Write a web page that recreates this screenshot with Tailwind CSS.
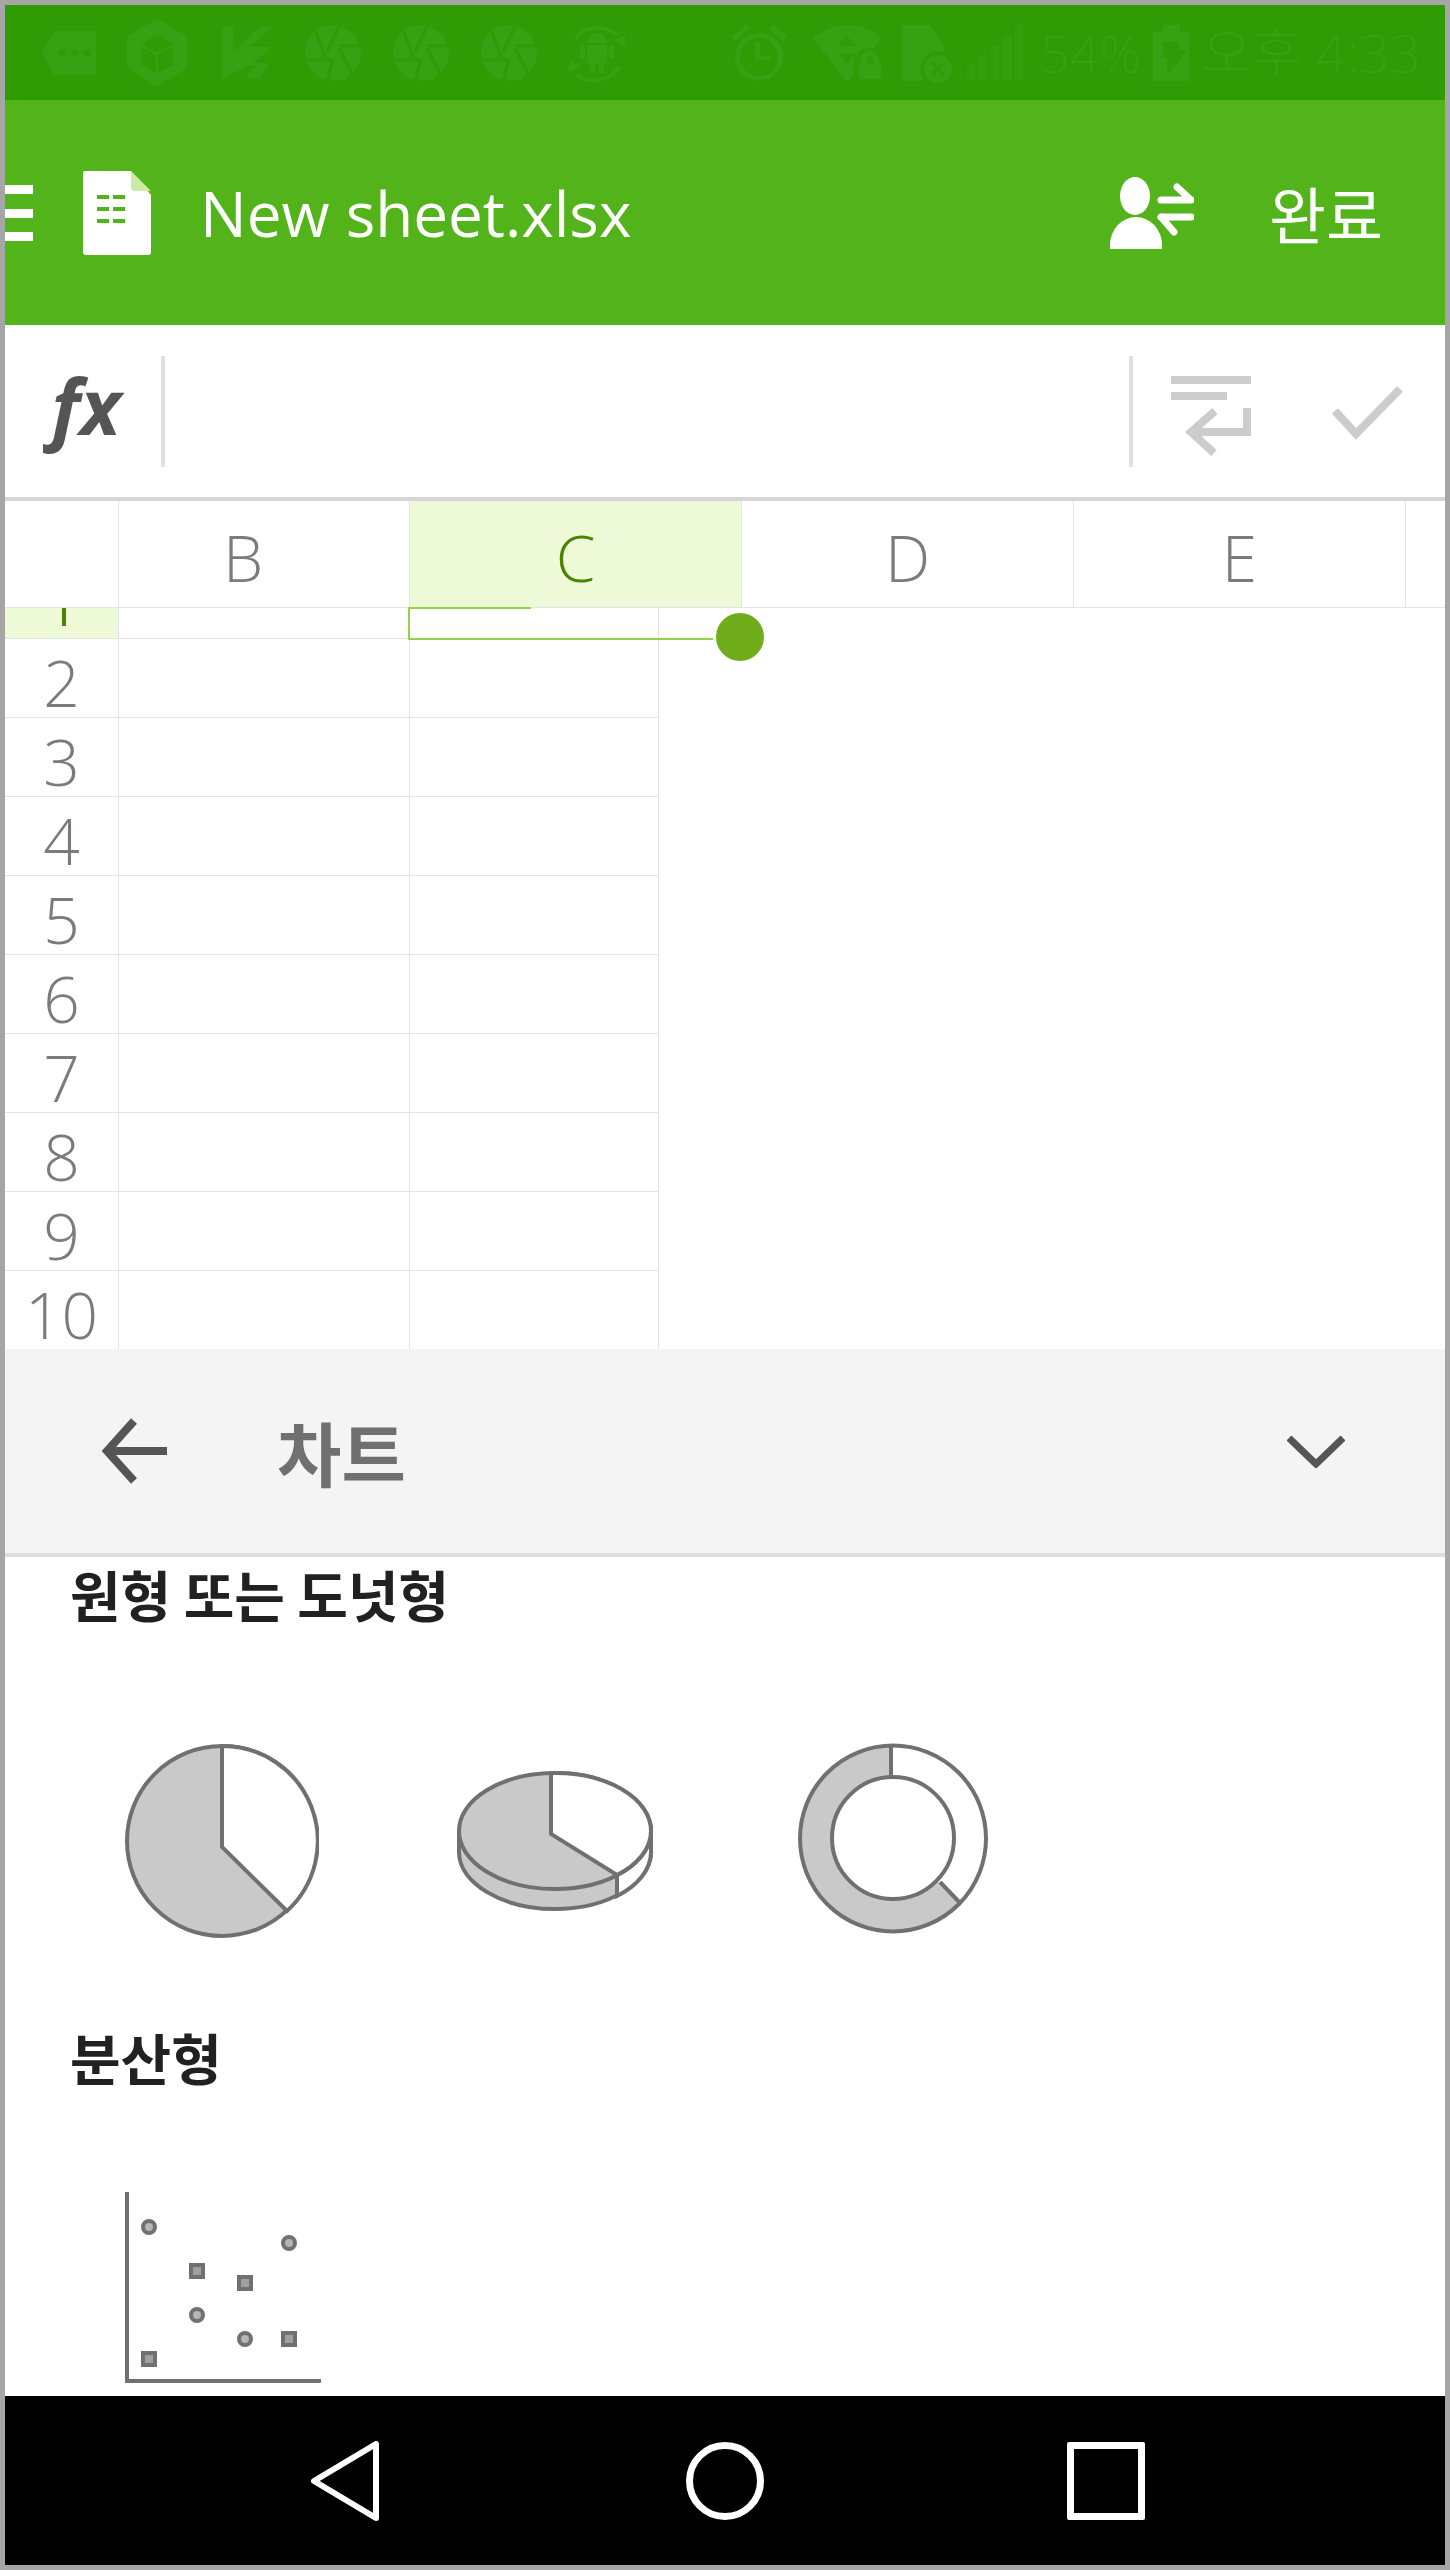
<!DOCTYPE html>
<html>
<head>
<meta charset="utf-8">
<script src="https://cdn.jsdelivr.net/npm/@tailwindcss/browser@4"></script>
</head>
<body class="bg-[#a6a6a6] font-['Open_Sans','Noto_Sans_CJK_KR',sans-serif]">
<div class="w-[1450px] h-[2570px] p-[5px] overflow-hidden">
  <div class="h-[2560px] bg-white flex flex-col overflow-hidden">

    <!-- status bar -->
    <div class="h-[95px] shrink-0 bg-[#2f9b05] text-[#38a013] relative">
      <svg class="absolute left-0 top-0" width="1440" height="95" viewBox="5 5 1440 95" fill="currentColor">
        <path d="M42 53l12-22h42v44H54z"/>
        <g fill="#2f9b05"><circle cx="62" cy="53" r="3.5"/><circle cx="75" cy="53" r="3.5"/><circle cx="87" cy="53" r="3.5"/></g>
        <path d="M155 20a4 4 0 0 1 4 0l26 15a4 4 0 0 1 2 4v26a4 4 0 0 1-2 4L159 86a4 4 0 0 1-4 0L129 69a4 4 0 0 1-2-4V39a4 4 0 0 1 2-4z"/>
        <path d="M157 34l16 11v20l-16 8-16-8V45z" fill="#2f9b05"/>
        <path d="M141 45l16 9 16-9M157 54v19" fill="none" stroke="currentColor" stroke-width="2.5"/>
        <path d="M222 27h11v25l27-25h13l-23 20h23l-21 16h14q6 0 2 3l-8 12h-15l12-13h-9l-26 15z"/>
        <g id="ap">
          <circle cx="333" cy="53" r="28"/>
          <path d="M340 25L327 52M362 46H339M353 75L339 49M327 80L333 60M305 60H333M315 30L326 59" fill="none" stroke="#2f9b05" stroke-width="3"/>
        </g>
        <use href="#ap" x="88"/>
        <use href="#ap" x="176"/>
        <path d="M575 38a30 30 0 0 1 42-3M619 67a30 30 0 0 1-42 8" fill="none" stroke="currentColor" stroke-width="4"/>
        <path d="M625 35v12l-11-7zM569 59v13l11-6z"/>
        <path d="M587 43a10 10 0 0 1 20 0zM587 45h20v18h-3v8a2.5 2.5 0 0 1-5 0v-8h-4v8a2.5 2.5 0 0 1-5 0v-8h-3zM580 45h5v13h-5zM609 45h5v13h-5z"/>
        <circle cx="759" cy="57" r="21.5" fill="none" stroke="currentColor" stroke-width="5"/>
        <path d="M755 42h5v14h11v4h-16zM731 37l15-13 4 5-15 12zM769 29l4-5 14 12-4 5z"/>
        <path d="M813 38a52 52 0 0 1 69 0l-35 44z"/>
        <path d="M847 36l10 10h-20zM837 53h20l-10 10z" fill="#2f9b05"/>
        <path d="M854 84V62a16 14 0 0 1 32 0V84z" fill="#2f9b05"/>
        <path d="M859 64h22v15h-22z"/>
        <path d="M863.5 66v-6a6.5 6.5 0 0 1 13 0v6" fill="none" stroke="currentColor" stroke-width="6"/>
        <path d="M902 25h28l14 20v36h-42z"/>
        <circle cx="938" cy="69" r="18" fill="#2f9b05"/>
        <circle cx="938" cy="69" r="14"/>
        <path d="M932 63l12 12M944 63l-12 12" stroke="#2f9b05" stroke-width="3"/>
        <path d="M967 65h8v16h-8zM979 56h8v25h-8zM991 46h8v35h-8zM1003 35h9v46h-9zM1015 25h8v56h-8z" opacity=".6"/>
        <path d="M1163 25h17v7h9v49h-36V32h10z"/>
        <path d="M1163 42h16v8h8l-20 26V58h-4z" fill="#2f9b05"/>
      </svg>
      <span class="absolute left-[1035px] top-[20px] text-[52px] leading-[56px] font-light">54%</span>
      <span class="absolute left-[1197px] top-[19px] text-[54px] leading-[56px] font-light">오후 4:33</span>
    </div>

    <!-- app bar -->
    <div class="h-[225px] shrink-0 bg-[#52b31a] flex items-center text-white">
      <div class="w-[28px] h-[56px] flex flex-col justify-between mt-[1px]">
        <div class="h-[9px] bg-white"></div><div class="h-[9px] bg-white"></div><div class="h-[9px] bg-white"></div>
      </div>
      <svg class="ml-[50px] mt-[1px]" width="68" height="84" viewBox="0 0 68 84">
        <path d="M2 0h46l20 24v57a3 3 0 0 1-3 3H3a3 3 0 0 1-3-3V2a2 2 0 0 1 2-2z" fill="#fff"/>
        <path d="M48 0l20 20H52a4 4 0 0 1-4-4z" fill="#cdeaa3"/>
        <path d="M14 24h12v4H14zM30 24h12v4H30zM14 36h12v4H14zM30 36h12v4H30zM14 48h12v4H14zM30 48h12v4H30z" fill="#52b31a"/>
      </svg>
      <span class="ml-[49px] text-[62px] leading-none font-normal">New sheet.xlsx</span>
      <svg class="ml-auto mt-[1px]" width="84" height="72" viewBox="0 0 84 72" fill="#fff">
        <ellipse cx="25" cy="19" rx="15" ry="19"/>
        <path d="M0 72v-4a26 28 0 0 1 52 0v4z"/>
        <path d="M51 23h30M67 10l14 13M81 40H51M64 55L51 40" fill="none" stroke="#fff" stroke-width="7" stroke-linecap="round"/>
      </svg>
      <span class="ml-[75px] mr-[62px] text-[62px] leading-none font-['Noto_Sans_CJK_KR',sans-serif] font-normal">완료</span>
    </div>

    <!-- formula bar -->
    <div class="h-[172px] shrink-0 flex items-center">
      <span class="w-[156px] text-center italic font-bold text-[#555] text-[77px] leading-none -mt-[12px] pl-[6px]">fx</span>
      <div class="w-[4px] h-[111px] mt-[1px] bg-[#e0e0e0]"></div>
      <div class="ml-auto w-[4px] h-[111px] mt-[1px] bg-[#e0e0e0]"></div>
      <svg class="ml-[38px] mt-[10px]" width="80" height="80" viewBox="0 0 80 80" fill="none" stroke="#cccccc" stroke-width="8">
        <path d="M0 4h80M0 20h56M76 32v24H22M44 35L20 56l23 21"/>
      </svg>
      <svg class="ml-[79px] mr-[41px] mt-[4px]" width="74" height="58" viewBox="0 0 74 58" fill="none" stroke="#cccccc" stroke-width="8">
        <path d="M5 27l21 23L70 5"/>
      </svg>
    </div>
    <div class="h-[4px] shrink-0 bg-[#d6d6d6]"></div>

    <!-- sheet -->
    <div class="h-[848px] shrink-0 relative text-[#7c7a7b] font-light">
      <!-- column headers -->
      <div class="h-[107px] flex border-b border-[#e3e3e3] text-[64px] leading-none">
        <div class="w-[114px] shrink-0 border-r border-[#e3e3e3]"></div>
        <div class="w-[291px] shrink-0 border-r border-[#e3e3e3] flex items-center justify-center pr-[42px] pt-[8px]">B</div>
        <div class="w-[332px] shrink-0 border-r border-[#e3e3e3] bg-[#eef9d8] text-[#4b8405] flex items-center justify-center pt-[8px]">C</div>
        <div class="w-[332px] shrink-0 border-r border-[#e3e3e3] flex items-center justify-center pt-[8px]">D</div>
        <div class="w-[332px] shrink-0 border-r border-[#e3e3e3] flex items-center justify-center pt-[8px]">E</div>
      </div>
      <!-- rows -->
      <div class="w-[654px] text-[64px] leading-none">
        <div class="h-[31px] flex border-b border-[#e3e3e3]">
          <div class="w-[114px] shrink-0 bg-[#eef9d8] border-r border-[#e3e3e3] relative"><span class="absolute left-[57px] top-0 w-[4px] h-[18px] bg-[#4b8405]"></span></div>
          <div class="w-[291px] shrink-0 border-r border-[#e3e3e3]"></div>
          <div class="flex-1 border-r border-[#e3e3e3]"></div>
        </div>
        <div class="h-[79px] flex border-b border-[#e3e3e3]"><div class="w-[114px] shrink-0 border-r border-[#e3e3e3] flex items-center justify-center pt-[10px]">2</div><div class="w-[291px] shrink-0 border-r border-[#e3e3e3]"></div><div class="flex-1 border-r border-[#e3e3e3]"></div></div>
        <div class="h-[79px] flex border-b border-[#e3e3e3]"><div class="w-[114px] shrink-0 border-r border-[#e3e3e3] flex items-center justify-center pt-[10px]">3</div><div class="w-[291px] shrink-0 border-r border-[#e3e3e3]"></div><div class="flex-1 border-r border-[#e3e3e3]"></div></div>
        <div class="h-[79px] flex border-b border-[#e3e3e3]"><div class="w-[114px] shrink-0 border-r border-[#e3e3e3] flex items-center justify-center pt-[10px]">4</div><div class="w-[291px] shrink-0 border-r border-[#e3e3e3]"></div><div class="flex-1 border-r border-[#e3e3e3]"></div></div>
        <div class="h-[79px] flex border-b border-[#e3e3e3]"><div class="w-[114px] shrink-0 border-r border-[#e3e3e3] flex items-center justify-center pt-[10px]">5</div><div class="w-[291px] shrink-0 border-r border-[#e3e3e3]"></div><div class="flex-1 border-r border-[#e3e3e3]"></div></div>
        <div class="h-[79px] flex border-b border-[#e3e3e3]"><div class="w-[114px] shrink-0 border-r border-[#e3e3e3] flex items-center justify-center pt-[10px]">6</div><div class="w-[291px] shrink-0 border-r border-[#e3e3e3]"></div><div class="flex-1 border-r border-[#e3e3e3]"></div></div>
        <div class="h-[79px] flex border-b border-[#e3e3e3]"><div class="w-[114px] shrink-0 border-r border-[#e3e3e3] flex items-center justify-center pt-[10px]">7</div><div class="w-[291px] shrink-0 border-r border-[#e3e3e3]"></div><div class="flex-1 border-r border-[#e3e3e3]"></div></div>
        <div class="h-[79px] flex border-b border-[#e3e3e3]"><div class="w-[114px] shrink-0 border-r border-[#e3e3e3] flex items-center justify-center pt-[10px]">8</div><div class="w-[291px] shrink-0 border-r border-[#e3e3e3]"></div><div class="flex-1 border-r border-[#e3e3e3]"></div></div>
        <div class="h-[79px] flex border-b border-[#e3e3e3]"><div class="w-[114px] shrink-0 border-r border-[#e3e3e3] flex items-center justify-center pt-[10px]">9</div><div class="w-[291px] shrink-0 border-r border-[#e3e3e3]"></div><div class="flex-1 border-r border-[#e3e3e3]"></div></div>
        <div class="h-[78px] flex"><div class="w-[114px] shrink-0 border-r border-[#e3e3e3] flex items-center justify-center pt-[10px]">10</div><div class="w-[291px] shrink-0 border-r border-[#e3e3e3]"></div><div class="flex-1 border-r border-[#e3e3e3]"></div></div>
      </div>
      <!-- selection overlay -->
      <div class="absolute left-[403px] top-[106px] w-[305px] h-[33px] border-l-2 border-b-2 border-[#93d24a]"></div>
      <div class="absolute left-[403px] top-[106px] w-[123px] h-[2px] bg-[#93d24a]"></div>
      <div class="absolute left-[711px] top-[112px] w-[48px] h-[48px] rounded-full bg-[#6fae1a]"></div>
    </div>

    <!-- chart panel header -->
    <div class="h-[204px] shrink-0 bg-[#f4f4f4] flex items-center">
      <svg class="ml-[96px]" width="66" height="68" viewBox="0 0 66 68" fill="none" stroke="#555" stroke-width="8">
        <path d="M66 34H6M33 4L6 34l27 30"/>
      </svg>
      <span class="ml-[110px] mt-[1px] text-[70px] leading-none font-bold text-[#707070] font-['Noto_Sans_CJK_KR',sans-serif]">차트</span>
      <svg class="ml-auto mr-[100px]" width="58" height="34" viewBox="0 0 58 34" fill="none" stroke="#555" stroke-width="7">
        <path d="M2 4l27 26L56 4"/>
      </svg>
    </div>
    <div class="h-[4px] shrink-0 bg-[#dedede]"></div>

    <!-- chart types -->
    <div class="flex-1 font-['Noto_Sans_CJK_KR',sans-serif] text-[#212121] font-bold text-[55px] leading-none pl-[65px]">
      <div class="mt-[9px]">원형 또는 도넛형</div>
      <div class="flex mt-[122px] pl-[55px]">
        <svg width="194" height="196" viewBox="0 0 194 196" stroke="#707070" stroke-width="4">
          <circle cx="97" cy="98" r="95" fill="#c9c9c9"/>
          <path d="M97 3a95 95 0 0 1 65 165L97 104z" fill="#fff"/>
        </svg>
        <svg class="ml-[138px] mt-[28px]" width="196" height="140" viewBox="0 0 196 140" stroke="#707070" stroke-width="4">
          <path d="M2 60v21c0 31 43 57 96 57s96-26 96-57V60z" fill="#c9c9c9"/>
          <path d="M160 104v21c20-10 34-26 34-44V60z" fill="#fff"/>
          <ellipse cx="98" cy="60" rx="96" ry="58" fill="#c9c9c9"/>
          <path d="M94 2A96 58 0 0 1 194 60C194 78 180 94 160 104L94 63z" fill="#fff"/>
        </svg>
        <svg class="ml-[145px]" width="190" height="191" viewBox="0 0 190 191" stroke="#707070" stroke-width="4">
          <circle cx="95" cy="95.5" r="93" fill="#c9c9c9" stroke="none"/>
          <path d="M95 95.5L93 2.5a93 93 0 0 1 70 158z" fill="#fff" stroke="none"/>
          <circle cx="95" cy="95.5" r="93" fill="none"/>
          <circle cx="95" cy="95" r="61" fill="#fff"/>
          <path d="M93 3v31M142 139l21 22" fill="none"/>
        </svg>
      </div>
      <div class="mt-[90px]">분산형</div>
      <div class="mt-[106px] pl-[55px]">
        <svg width="198" height="194" viewBox="0 0 198 194" fill="#b5b5b5" stroke="#707070" stroke-width="4">
          <path d="M2 2v189h194" fill="none"/>
          <circle cx="24" cy="37" r="6"/>
          <circle cx="164" cy="53" r="6"/>
          <circle cx="72" cy="125" r="6"/>
          <circle cx="120" cy="149" r="6"/>
          <rect x="66" y="75" width="12" height="12" fill="#a0a0a0"/>
          <rect x="114" y="87" width="12" height="12" fill="#a0a0a0"/>
          <rect x="158" y="143" width="12" height="12" fill="#a0a0a0"/>
          <rect x="18" y="163" width="12" height="12" fill="#a0a0a0"/>
        </svg>
      </div>
    </div>

    <!-- nav bar -->
    <div class="h-[169px] shrink-0 bg-black flex items-center">
      <svg class="ml-[305px]" width="72" height="80" viewBox="0 0 72 80" fill="none" stroke="#fff" stroke-width="6" stroke-linejoin="round">
        <path d="M66 3v74L4 40z"/>
      </svg>
      <div class="ml-[304px] w-[78px] h-[78px] rounded-full border-[7px] border-white"></div>
      <div class="ml-[303px] w-[78px] h-[78px] rounded-[2px] border-[7px] border-white"></div>
    </div>
  </div>
</div>
</body>
</html>
